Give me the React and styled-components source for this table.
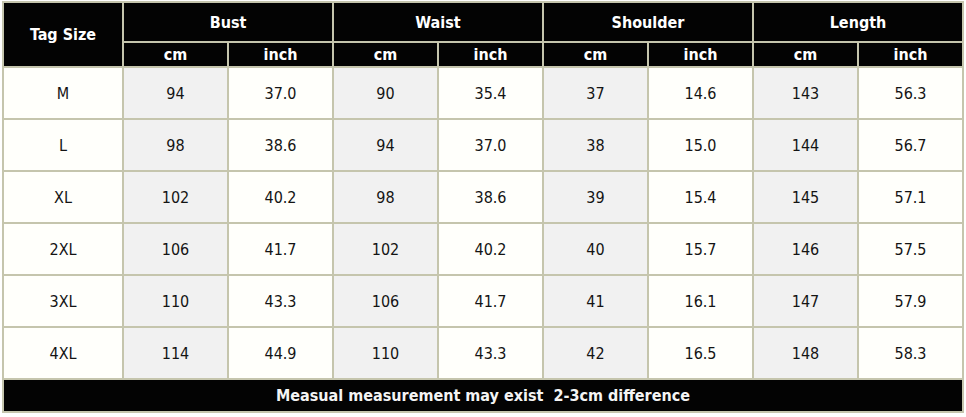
import React from "react";
import styled, { createGlobalStyle } from "styled-components";

const Global = createGlobalStyle`
  html, body { margin: 0; padding: 0; background: #ffffff; }
  body { font-family: "DejaVu Sans Condensed", "DejaVu Sans", Tahoma, sans-serif; }
`;

const Table = styled.div`
  margin: 1px 0 0 2px;
  width: 962px;
  box-sizing: border-box;
  display: grid;
  grid-template-columns: 118px repeat(8, 1fr);
  grid-template-rows: 38px 23px repeat(6, 50px) 31px;
  gap: 2px;
  padding: 2px;
  background: #c5c5ad;
`;

const HeadCell = styled.div`
  background: #030303;
  color: #ffffff;
  font-weight: bold;
  font-size: 16px;
  display: flex;
  align-items: center;
  justify-content: center;
  grid-column: ${(p) => p.$col || "auto"};
  grid-row: ${(p) => p.$row || "auto"};
  padding-top: ${(p) => p.$pt || 0}px;
  box-sizing: border-box;
`;

const Cell = styled.div`
  background: ${(p) => (p.$shade ? "#f1f1f1" : "#fffffb")};
  color: #141414;
  font-size: 16px;
  display: flex;
  align-items: center;
  justify-content: center;
`;

const Footer = styled.div`
  grid-column: 1 / -1;
  background: #030303;
  color: #f4f4f4;
  font-weight: bold;
  font-size: 16px;
  display: flex;
  align-items: center;
  justify-content: center;
  white-space: pre;
`;

const groups = ["Bust", "Waist", "Shoulder", "Length"];

const rows = [
  ["M", "94", "37.0", "90", "35.4", "37", "14.6", "143", "56.3"],
  ["L", "98", "38.6", "94", "37.0", "38", "15.0", "144", "56.7"],
  ["XL", "102", "40.2", "98", "38.6", "39", "15.4", "145", "57.1"],
  ["2XL", "106", "41.7", "102", "40.2", "40", "15.7", "146", "57.5"],
  ["3XL", "110", "43.3", "106", "41.7", "41", "16.1", "147", "57.9"],
  ["4XL", "114", "44.9", "110", "43.3", "42", "16.5", "148", "58.3"],
];

export default function App() {
  return (
    <>
      <Global />
      <Table>
        <HeadCell $col="1" $row="1 / span 2" $pt={0}>
          Tag Size
        </HeadCell>
        {groups.map((g, i) => (
          <HeadCell key={g} $col={`${2 + i * 2} / span 2`} $row="1" $pt={0}>
            {g}
          </HeadCell>
        ))}
        {groups.map((g) => (
          <React.Fragment key={g + "u"}>
            <HeadCell $row="2">cm</HeadCell>
            <HeadCell $row="2">inch</HeadCell>
          </React.Fragment>
        ))}
        {rows.map((r) =>
          r.map((v, j) => (
            <Cell key={r[0] + j} $shade={j > 0 && j % 2 === 1}>
              {v}
            </Cell>
          ))
        )}
        <Footer>{"Measual measurement may exist  2-3cm difference"}</Footer>
      </Table>
    </>
  );
}
